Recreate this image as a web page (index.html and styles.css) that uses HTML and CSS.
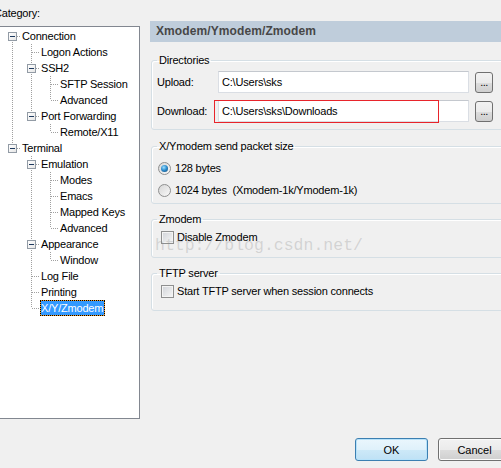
FILE: index.html
```html
<!DOCTYPE html>
<html>
<head>
<meta charset="utf-8">
<link rel="stylesheet" href="styles.css">
</head>
<body>
<div class="dialog">
  <div class="frame">
    <div class="main">
      <div class="left">
        <div class="cat">Category:</div>
        <div class="treebox">
          <ul class="tree">
            <li>
              <div class="row"><span class="exp"></span><span class="lbl">Connection</span></div>
              <ul>
                <li><div class="row"><span class="lbl">Logon Actions</span></div></li>
                <li>
                  <div class="row"><span class="exp"></span><span class="lbl">SSH2</span></div>
                  <ul>
                    <li><div class="row"><span class="lbl">SFTP Session</span></div></li>
                    <li><div class="row"><span class="lbl">Advanced</span></div></li>
                  </ul>
                </li>
                <li>
                  <div class="row"><span class="exp"></span><span class="lbl">Port Forwarding</span></div>
                  <ul>
                    <li><div class="row"><span class="lbl">Remote/X11</span></div></li>
                  </ul>
                </li>
              </ul>
            </li>
            <li>
              <div class="row"><span class="exp"></span><span class="lbl">Terminal</span></div>
              <ul>
                <li>
                  <div class="row"><span class="exp"></span><span class="lbl">Emulation</span></div>
                  <ul>
                    <li><div class="row"><span class="lbl">Modes</span></div></li>
                    <li><div class="row"><span class="lbl">Emacs</span></div></li>
                    <li><div class="row"><span class="lbl">Mapped Keys</span></div></li>
                    <li><div class="row"><span class="lbl">Advanced</span></div></li>
                  </ul>
                </li>
                <li>
                  <div class="row"><span class="exp"></span><span class="lbl">Appearance</span></div>
                  <ul>
                    <li><div class="row"><span class="lbl">Window</span></div></li>
                  </ul>
                </li>
                <li><div class="row"><span class="lbl">Log File</span></div></li>
                <li><div class="row"><span class="lbl">Printing</span></div></li>
                <li><div class="row"><span class="lbl sel">X/Y/Zmodem</span></div></li>
              </ul>
            </li>
          </ul>
        </div>
      </div>

      <div class="right">
        <div class="hdr">Xmodem/Ymodem/Zmodem</div>

        <fieldset class="grp dirs">
          <legend>Directories</legend>
          <div class="frow">
            <span class="flabel">Upload:</span>
            <span class="tbox">C:\Users\sks</span>
            <span class="browse">...</span>
          </div>
          <div class="frow">
            <span class="flabel">Download:</span>
            <span class="tbox">C:\Users\sks\Downloads</span>
            <span class="browse">...</span>
            <span class="annot"></span>
          </div>
        </fieldset>

        <fieldset class="grp packet">
          <legend>X/Ymodem send packet size</legend>
          <div class="opt"><span class="radio on"></span><span class="otext">128 bytes</span></div>
          <div class="opt"><span class="radio"></span><span class="otext">1024 bytes&nbsp; (Xmodem-1k/Ymodem-1k)</span></div>
        </fieldset>

        <fieldset class="grp zmodem">
          <legend>Zmodem</legend>
          <div class="opt"><span class="chk"></span><span class="ctext">Disable Zmodem</span></div>
        </fieldset>

        <fieldset class="grp tftp">
          <legend>TFTP server</legend>
          <div class="opt"><span class="chk"></span><span class="ctext">Start TFTP server when session connects</span></div>
        </fieldset>

        <div class="watermark">http://blog.csdn.net/</div>
      </div>
    </div>

    <div class="buttons">
      <button class="btn default">OK</button>
      <button class="btn">Cancel</button>
    </div>
  </div>
</div>
</body>
</html>
```

FILE: styles.css
```css
html, body {
  margin: 0;
  padding: 0;
  background: #f0f0f0;
  overflow: hidden;
}

body {
  font-family: "Liberation Sans", Arial, sans-serif;
  font-size: 11px;
  letter-spacing: -0.2px;
  color: #000;
}

.dialog {
  width: 501px;
  height: 468px;
  overflow: hidden;
}

.frame {
  width: 520px;
}

.main {
  display: flex;
  height: 419px;
}

/* ---------- left: category tree ---------- */
.left {
  width: 150px;
  flex: none;
}

.cat {
  padding: 7px 0 6px;
  line-height: 13px;
  margin-left: -6px;
}

.treebox {
  box-sizing: border-box;
  width: 141px;
  height: 393px;
  margin-left: -1px;
  background: #fff;
  border: 1px solid #828790;
  padding-left: 1px;
}

.tree,
.tree ul {
  list-style: none;
  margin: 0;
  padding: 0;
}

.tree {
  padding-top: 1px;
}

.tree ul {
  margin-left: -1px;
}

.tree li {
  position: relative;
  padding-left: 20px;
}

.tree li::before {
  content: "";
  position: absolute;
  left: 11px;
  top: 0;
  bottom: 0;
  width: 1px;
  background: repeating-linear-gradient(to bottom, #a0a0a0 0 1px, transparent 1px 2px);
}

.tree > li:first-child::before {
  top: 8px;
}

.tree li:last-child::before {
  bottom: auto;
  height: 8px;
}

.tree li::after {
  content: "";
  position: absolute;
  left: 12px;
  top: 8px;
  width: 8px;
  height: 1px;
  background: repeating-linear-gradient(to right, #a0a0a0 0 1px, transparent 1px 2px);
}

.row {
  height: 16px;
}

.exp {
  position: absolute;
  z-index: 1;
  left: 7px;
  top: 4px;
  width: 9px;
  height: 9px;
  box-sizing: border-box;
  border: 1px solid #929ba5;
  background: linear-gradient(135deg, #ffffff 0%, #e6e6e6 100%);
}

.exp::after {
  content: "";
  position: absolute;
  left: 1px;
  top: 3px;
  width: 5px;
  height: 1px;
  background: #1e3a5f;
}

.lbl {
  display: inline-block;
  line-height: 14px;
  border: 1px solid transparent;
  padding-right: 1px;
  white-space: nowrap;
}

.lbl.sel {
  color: #fff;
  border: 1px dotted #000;
  background: linear-gradient(#3399ff, #3399ff) padding-box, #f39c28 border-box;
}

/* ---------- right panel ---------- */
.right {
  position: relative;
  width: 360px;
  flex: none;
  padding-top: 21px;
}

.hdr {
  height: 21px;
  line-height: 21px;
  padding-left: 6px;
  background: #bfcddb;
  color: #474747;
  font-size: 12px;
  font-weight: bold;
  letter-spacing: 0.1px;
}

.grp {
  margin: 9px 0 0 1px;
  border: 1px solid #d5dfe5;
  border-radius: 3px;
  box-shadow: inset 1px 1px 0 #fff;
  min-width: 0;
}

.grp legend {
  padding: 0 2px;
  line-height: 13px;
}

.dirs {
  margin-top: 12px;
  padding: 4px 0 7px 5px;
}

.frow {
  position: relative;
  display: flex;
  align-items: center;
  height: 22px;
}

.frow + .frow {
  margin-top: 7px;
}

.flabel {
  width: 61px;
  flex: none;
}

.tbox {
  box-sizing: border-box;
  width: 251px;
  height: 22px;
  line-height: 20px;
  padding-left: 3px;
  background: #fff;
  border: 1px solid #dadee4;
  border-top-color: #c4c8ce;
  white-space: nowrap;
}

.browse {
  box-sizing: border-box;
  width: 18px;
  height: 21px;
  margin-left: 6px;
  border: 1px solid #707070;
  border-radius: 3px;
  background: linear-gradient(#f2f2f2 0%, #ebebeb 50%, #dddddd 51%, #cfcfcf 100%);
  text-align: center;
  line-height: 19px;
  letter-spacing: -0.5px;
}

.annot {
  position: absolute;
  left: 57px;
  top: 0;
  width: 225px;
  height: 23px;
  box-sizing: border-box;
  border: 1px solid #e8242b;
}

.packet {
  margin-top: 10px;
  padding: 8px 0 6px 5px;
}

.zmodem {
  padding: 4px 0 13px 5px;
}

.tftp {
  padding: 4px 0 12px 5px;
}

.opt {
  display: flex;
  align-items: center;
  height: 14px;
  white-space: nowrap;
}

.opt + .opt {
  margin-top: 8px;
}

.radio {
  position: relative;
  box-sizing: border-box;
  width: 13px;
  height: 13px;
  margin-left: 1px;
  border-radius: 50%;
  border: 1px solid #8e8f8f;
  background: linear-gradient(135deg, #d6d6d6 0%, #f9f9f9 100%);
  flex: none;
}

.radio.on::after {
  content: "";
  position: absolute;
  left: 2px;
  top: 2px;
  width: 7px;
  height: 7px;
  border-radius: 50%;
  background: radial-gradient(circle at 40% 35%, #9fe0ff 0%, #2f8fd0 45%, #0c4270 100%);
}

.otext {
  margin-left: 4px;
}

.chk {
  box-sizing: border-box;
  width: 13px;
  height: 13px;
  margin-left: 4px;
  border: 1px solid #8e8f8f;
  background: linear-gradient(135deg, #d0d3d8 0%, #f7f7f7 100%);
  box-shadow: inset 0 0 0 1px #f4f4f4;
  flex: none;
}

.ctext {
  margin-left: 3px;
}

.watermark {
  position: absolute;
  left: 5px;
  top: 236px;
  font-family: "Liberation Mono", "Courier New", monospace;
  font-size: 16.5px;
  line-height: 20px;
  letter-spacing: 0;
  color: rgba(140, 140, 140, 0.3);
  white-space: nowrap;
  pointer-events: none;
}

/* ---------- buttons ---------- */
.buttons {
  display: flex;
  justify-content: flex-end;
  gap: 10px;
  margin-top: 19px;
  padding-right: 9px;
}

.btn {
  box-sizing: border-box;
  width: 73px;
  height: 23px;
  margin: 0;
  padding: 0;
  font-family: "Liberation Sans", Arial, sans-serif;
  font-size: 11px;
  color: #000;
  border: 1px solid #707070;
  border-radius: 3px;
  background: linear-gradient(#f2f2f2 0%, #ebebeb 50%, #dddddd 51%, #cfcfcf 100%);
  box-shadow: inset 0 0 0 1px #fbfbfb;
}

.btn.default {
  border-color: #3c7fb1;
  background: linear-gradient(#eaf6fd 0%, #dff1fb 50%, #cde9f8 51%, #bfe1f5 100%);
  box-shadow: inset 0 0 0 1px #b7e2fa;
}
```
